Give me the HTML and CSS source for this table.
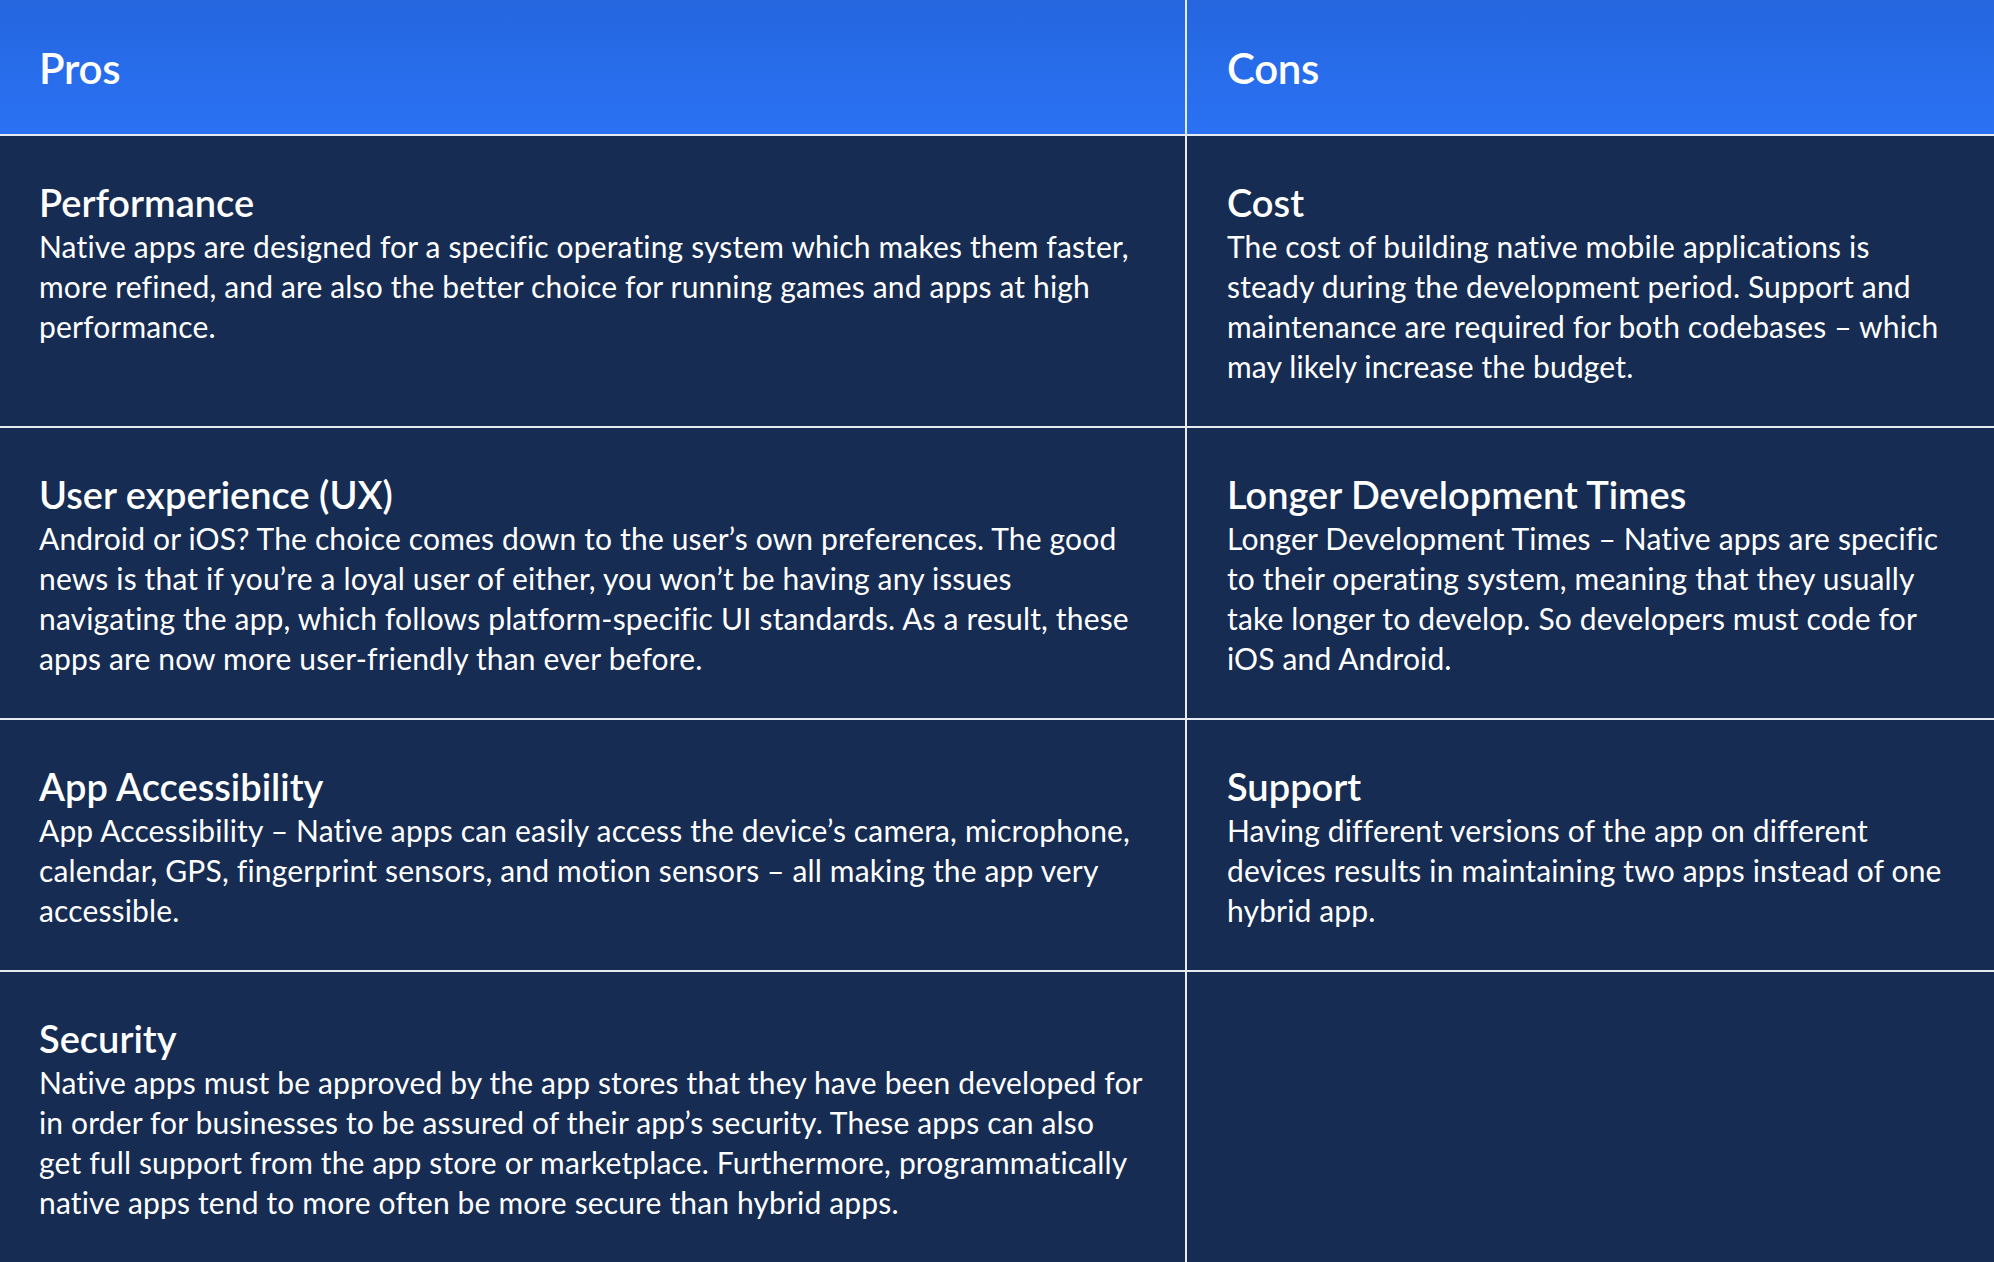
FILE: index.html
```html
<!DOCTYPE html>
<html lang="en">
<head>
<meta charset="utf-8">
<title>Pros and Cons</title>
<link rel="stylesheet" href="styles.css">
</head>
<body>
<div class="table">
  <div class="head">Pros</div>
  <div class="head">Cons</div>

  <div class="cell">
    <h3>Performance</h3>
    <p>Native apps are designed for a specific operating system which makes them faster, more refined, and are also the better choice for running games and apps at high performance.</p>
  </div>
  <div class="cell">
    <h3>Cost</h3>
    <p>The cost of building native mobile applications is steady during the development period. Support and maintenance are required for both codebases – which may likely increase the budget.</p>
  </div>

  <div class="cell">
    <h3>User experience (UX)</h3>
    <p>Android or iOS? The choice comes down to the user’s own preferences. The good news is that if you’re a loyal user of either, you won’t be having any issues navigating the app, which follows platform-specific UI standards. As a result, these apps are now more user-friendly than ever before.</p>
  </div>
  <div class="cell">
    <h3>Longer Development Times</h3>
    <p>Longer Development Times – Native apps are specific to their operating system, meaning that they usually take longer to develop. So developers must code for iOS and Android.</p>
  </div>

  <div class="cell">
    <h3>App Accessibility</h3>
    <p>App Accessibility – Native apps can easily access the device’s camera, microphone, calendar, GPS, fingerprint sensors, and motion sensors – all making the app very accessible.</p>
  </div>
  <div class="cell">
    <h3>Support</h3>
    <p>Having different versions of the app on different devices results in maintaining two apps instead of one hybrid app.</p>
  </div>

  <div class="cell">
    <h3>Security</h3>
    <p>Native apps must be approved by the app stores that they have been developed for in order for businesses to be assured of their app’s security. These apps can also<br>get full support from the app store or marketplace. Furthermore, programmatically native apps tend to more often be more secure than hybrid apps.</p>
  </div>
  <div class="cell"></div>
</div>
</body>
</html>
```

FILE: styles.css
```css
html, body {
  margin: 0;
  padding: 0;
  background: #162c52;
}

body {
  font-family: "Lato", "Noto Sans", sans-serif;
  color: #ffffff;
  -webkit-font-smoothing: antialiased;
}

.table {
  display: grid;
  grid-template-columns: 1185px 1fr;
  gap: 2px;
  background: #e6eaf1;
  min-height: 1262px;
}

.head {
  background: linear-gradient(180deg, #2566df 0%, #2a72f4 100%);
  height: 134px;
  display: flex;
  align-items: center;
  padding-left: 39px;
  padding-top: 2px;
  box-sizing: border-box;
  font-size: 42px;
  font-weight: 600;
  letter-spacing: -0.3px;
}

.head:nth-child(2) {
  padding-left: 40px;
}

.cell {
  background: #162c52;
  padding: 44px 32px 40px 39px;
}

.cell:nth-child(even) {
  padding: 44px 40px 40px 40px;
}

.cell h3 {
  margin: 0 0 2px 0;
  font-size: 38px;
  line-height: 44px;
  font-weight: 600;
  letter-spacing: 0;
}

.cell p {
  margin: 0;
  font-size: 30px;
  line-height: 40px;
  font-weight: 400;
  letter-spacing: 0.15px;
}
```
